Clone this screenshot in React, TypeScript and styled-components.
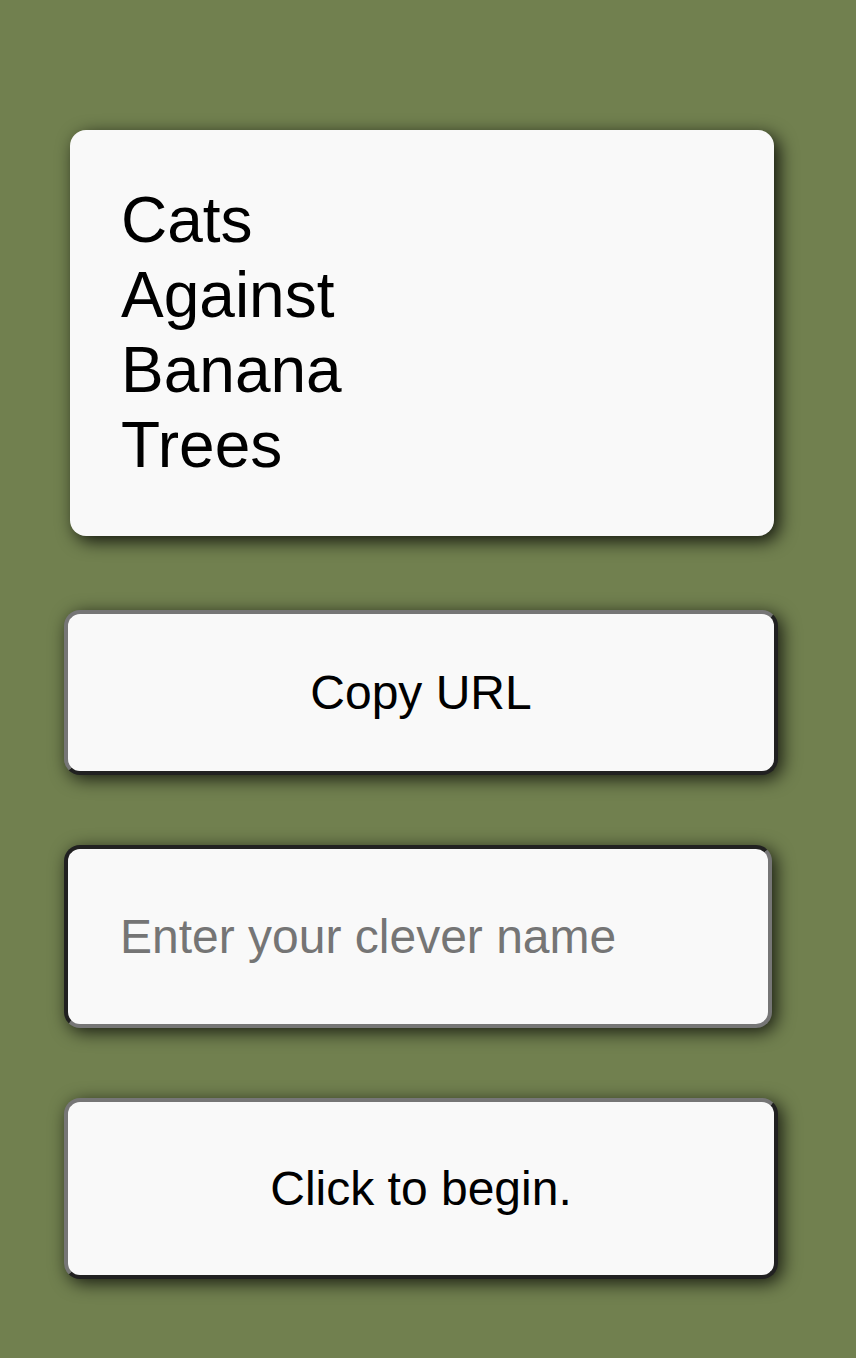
import React from 'react';
import styled, { createGlobalStyle } from 'styled-components';

const GlobalStyle = createGlobalStyle`
  html, body {
    margin: 0;
    padding: 0;
    background: #71804f;
  }
  body {
    font-family: "Liberation Sans", Arial, Helvetica, sans-serif;
  }
  * {
    box-sizing: border-box;
  }
`;

const Page = styled.main`
  min-height: 1358px;
  display: flex;
  flex-direction: column;
  align-items: flex-start;
  gap: 70px;
  padding: 130px 0 79px 64px;
`;

const TitleCard = styled.section`
  width: 704px;
  height: 406px;
  margin-left: 6px;
  margin-bottom: 4px;
  padding: 53px 51px;
  background: #f9f9f9;
  border-radius: 16px;
  box-shadow: 5px 5px 18px rgba(0, 0, 0, 0.85);
`;

const Title = styled.h1`
  margin: 0;
  width: min-content;
  font-size: 64px;
  line-height: 75px;
  font-weight: 400;
  color: #000;
`;

// outset look for buttons, inset look for the text field
const ActionButton = styled.button<{ $height: number }>`
  width: 714px;
  height: ${({ $height }) => $height}px;
  display: flex;
  align-items: center;
  justify-content: center;
  padding: 0;
  background: #f9f9f9;
  color: #000;
  font-family: inherit;
  font-size: 48px;
  border: 4px solid;
  border-color: #767676 #212121 #212121 #767676;
  border-radius: 16px;
  box-shadow: 4px 4px 18px rgba(0, 0, 0, 0.8);
  cursor: pointer;
`;

const NameInput = styled.input`
  width: 708px;
  height: 183px;
  padding: 0 52px;
  background: #f9f9f9;
  color: #000;
  font-family: inherit;
  font-size: 48px;
  border: 4px solid;
  border-color: #212121 #767676 #767676 #212121;
  border-radius: 16px;
  box-shadow: 4px 4px 18px rgba(0, 0, 0, 0.8);
  outline: none;

  &::placeholder {
    color: #757575;
  }
`;

export default function App() {
  return (
    <>
      <GlobalStyle />
      <Page>
        <TitleCard>
          <Title>Cats Against Banana Trees</Title>
        </TitleCard>
        <ActionButton $height={165}>Copy URL</ActionButton>
        <NameInput placeholder="Enter your clever name" />
        <ActionButton $height={181}>Click to begin.</ActionButton>
      </Page>
    </>
  );
}
